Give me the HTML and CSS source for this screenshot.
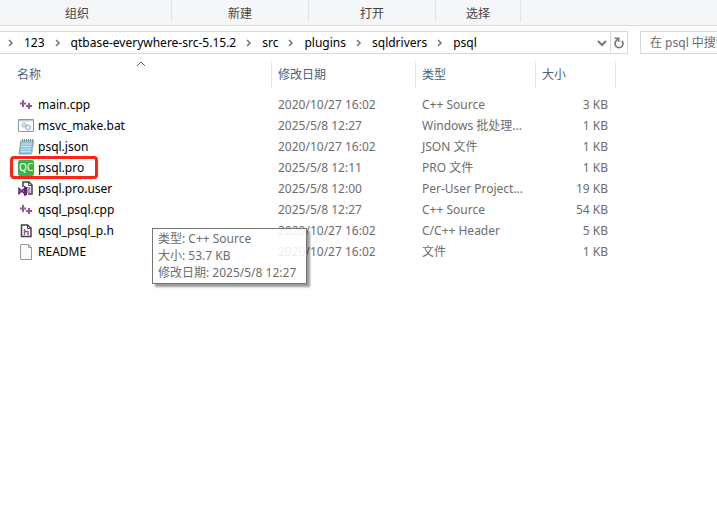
FILE: index.html
```html
<!DOCTYPE html>
<html lang="zh-CN">
<head>
    <meta charset="UTF-8">
    <meta name="viewport" content="width=device-width, initial-scale=1.0">
    <title>psql</title>
    <link rel="stylesheet" href="styles.css">
</head>
<body>
    <!-- Shared icons -->
    <svg class="sprite" aria-hidden="true">
        <symbol id="chevron" viewBox="0 0 8 8">
            <path d="M2 1l3 3-3 3" fill="none" stroke="#777" stroke-width="1.6"/>
        </symbol>
        <symbol id="cpp" viewBox="0 0 16 16">
            <path d="M5 3v7M2 6.500h6M11 6v6M8 9h6" fill="none" stroke="#96569b" stroke-width="2"/>
        </symbol>
    </svg>

    <!-- Ribbon -->
    <div class="ribbon">
        <div class="group group-organize">组织</div>
        <div class="group group-new">新建</div>
        <div class="group group-open">打开</div>
        <div class="group group-select">选择</div>
    </div>

    <!-- Address bar -->
    <div class="toolbar">
        <div class="address">
            <nav class="crumbs">
                <svg class="chevron"><use href="#chevron"/></svg>
                <a href="#">123</a>
                <svg class="chevron"><use href="#chevron"/></svg>
                <a href="#">qtbase-everywhere-src-5.15.2</a>
                <svg class="chevron"><use href="#chevron"/></svg>
                <a href="#">src</a>
                <svg class="chevron"><use href="#chevron"/></svg>
                <a href="#">plugins</a>
                <svg class="chevron"><use href="#chevron"/></svg>
                <a href="#">sqldrivers</a>
                <svg class="chevron"><use href="#chevron"/></svg>
                <a href="#">psql</a>
            </nav>
            <button class="history" type="button" aria-label="历史记录">
                <svg width="10" height="8" viewBox="0 0 10 8"><path d="M1 2l4 4 4-4" fill="none" stroke="#777" stroke-width="2"/></svg>
            </button>
            <button class="refresh" type="button" aria-label="刷新">
                <svg width="12" height="12" viewBox="0 0 12 12">
                    <path d="M8.800 3.800a4 4 0 1 1-5.600 0L5 2" fill="none" stroke="#777" stroke-width="1.700"/>
                    <path d="M1.500 1.200h4.300V5" fill="none" stroke="#777" stroke-width="1.500"/>
                </svg>
            </button>
        </div>
        <input class="search" type="text" placeholder="在 psql 中搜索" aria-label="搜索">
    </div>

    <!-- File list -->
    <table class="files">
        <colgroup>
            <col class="col-name">
            <col class="col-date">
            <col class="col-type">
            <col class="col-size">
        </colgroup>
        <thead>
            <tr>
                <th>
                    <svg class="sort" viewBox="0 0 10 6"><path d="M1 5l4-4 4 4" fill="none" stroke="#666"/></svg>
                    <button type="button">名称</button>
                </th>
                <th><button type="button">修改日期</button></th>
                <th><button type="button">类型</button></th>
                <th><button type="button">大小</button></th>
            </tr>
        </thead>
        <tbody>
            <tr>
                <td><a class="file" href="#"><svg class="icon"><use href="#cpp"/></svg>main.cpp</a></td>
                <td>2020/10/27 16:02</td>
                <td>C++ Source</td>
                <td>3 KB</td>
            </tr>
            <tr>
                <td><a class="file" href="#"><svg class="icon" viewBox="0 0 16 16">
                    <path d="M.5 1.500h15v12H.5z" fill="#fff" stroke="#8d949b"/>
                    <path d="M1 2h14v1.500H1z" fill="#c5cbd1"/>
                    <circle cx="6" cy="7" r="2" fill="#e5edf2" stroke="#8795a0" stroke-dasharray="1.500 .5"/>
                    <circle cx="10" cy="9.500" r="2.500" fill="#d9e8f3" stroke="#7f93a3" stroke-dasharray="1.500 .5"/>
                    <circle cx="10" cy="9.500" r="1" fill="#fff"/>
                </svg>msvc_make.bat</a></td>
                <td>2025/5/8 12:27</td>
                <td>Windows 批处理...</td>
                <td>1 KB</td>
            </tr>
            <tr>
                <td><a class="file" href="#"><svg class="icon" viewBox="0 0 16 16">
                    <path d="M3 1.500h12.500L13.500 15H1z" fill="#8fc6dc" stroke="#6ba3b8"/>
                    <path d="M3.500 5h10M3 7.500h10M3 10h10M2.500 12.500h10" stroke="#c5e6f1"/>
                    <path d="M3 2h12" stroke="#e4eef2"/>
                    <path d="M4.500 0v3M6.500 0v3M8.500 0v3M10.500 0v3M12.500 0v3M14.500 0v3" stroke="#7f8b92"/>
                    <path d="M13.500 15L15.500 4" fill="none" stroke="#c7b48c"/>
                </svg>psql.json</a></td>
                <td>2020/10/27 16:02</td>
                <td>JSON 文件</td>
                <td>1 KB</td>
            </tr>
            <tr>
                <td><a class="file marked" href="#"><span class="icon qt">QC</span>psql.pro</a></td>
                <td>2025/5/8 12:11</td>
                <td>PRO 文件</td>
                <td>1 KB</td>
            </tr>
            <tr>
                <td><a class="file" href="#"><svg class="icon" viewBox="0 0 16 16">
                    <path d="M5 6V1h6l3 3v9h-4" fill="#fff" stroke="#424242" stroke-width="1.500"/>
                    <path d="M10.500 1v3.500H14M9 7h3.500M9 9h3.500M9 11h3.500" fill="none" stroke="#424242"/>
                    <path d="M1 7.500v5l5.500-5v5z" fill="#fff" stroke="#68217a" stroke-width="1.500"/>
                    <path d="M6 5l3 1v8l-3 1z" fill="#68217a"/>
                </svg>psql.pro.user</a></td>
                <td>2025/5/8 12:00</td>
                <td>Per-User Project...</td>
                <td>19 KB</td>
            </tr>
            <tr>
                <td><a class="file" href="#"><svg class="icon"><use href="#cpp"/></svg>qsql_psql.cpp</a></td>
                <td>2025/5/8 12:27</td>
                <td>C++ Source</td>
                <td>54 KB</td>
            </tr>
            <tr>
                <td><a class="file" href="#"><svg class="icon" viewBox="0 0 16 16">
                    <path d="M3.500 2h6l3.500 3v8.500H3.500z" fill="#fff" stroke="#424242" stroke-width="1.500"/>
                    <path d="M9.500 2v3.500H13" fill="none" stroke="#424242"/>
                    <path d="M6.500 6v6M6.500 8.500H10V12" fill="none" stroke="#96569b" stroke-width="1.500"/>
                </svg>qsql_psql_p.h</a></td>
                <td>2020/10/27 16:02</td>
                <td>C/C++ Header</td>
                <td>5 KB</td>
            </tr>
            <tr>
                <td><a class="file" href="#"><svg class="icon" viewBox="0 0 16 16">
                    <path d="M2.500.5h8l3 3v12h-11z" fill="#fafafa" stroke="#999"/>
                    <path d="M10.500.5v3h3" fill="none" stroke="#999"/>
                </svg>README</a></td>
                <td>2020/10/27 16:02</td>
                <td>文件</td>
                <td>1 KB</td>
            </tr>
        </tbody>
    </table>

    <div class="tooltip" role="tooltip">
        <div>类型: C++ Source</div>
        <div>大小: 53.7 KB</div>
        <div>修改日期: 2025/5/8 12:27</div>
    </div>
</body>
</html>
```
FILE: styles.css
```css
* {
    box-sizing: border-box;
    margin: 0;
    padding: 0;
}

body {
    position: relative;
    min-height: 100vh;
    font-family: "Noto Sans", "Noto Sans CJK SC", sans-serif;
    font-size: 12px;
    line-height: 17px;
    color: #6d6d6d;
    background-color: #fff;
}

a {
    color: #000;
    text-decoration: none;
}

button {
    font: inherit;
    color: inherit;
    background: none;
    border: 0;
}

.sprite {
    position: absolute;
    width: 0;
    height: 0;
}

/* Ribbon */
.ribbon {
    display: flex;
    height: 26px;
    padding-bottom: 3px;
    background-color: #f5f6f7;
    border-bottom: 1px solid #dadbdc;
    color: #444;
}

.group {
    padding-top: 5px;
    border-right: 1px solid #e2e3e4;
    text-align: center;
}

.group-organize {
    width: 172px;
    padding-right: 17px;
}

.group-new {
    width: 137px;
}

.group-open {
    width: 127px;
}

.group-select {
    width: 85px;
}

/* Address bar */
.toolbar {
    display: flex;
    gap: 12px;
    margin-top: 5px;
}

.address {
    display: flex;
    flex: 1;
    height: 23px;
    border: 1px solid #d9d9d9;
    border-left: 0;
}

.crumbs {
    display: flex;
    flex: 1;
    align-items: center;
    gap: 9px;
    padding-left: 7px;
    white-space: nowrap;
}

.chevron {
    width: 8px;
    height: 8px;
}

.history,
.refresh {
    display: flex;
    align-items: center;
    justify-content: center;
    width: 17px;
}

.refresh {
    border-left: 1px solid #d9d9d9;
}

.search {
    width: 77px;
    height: 23px;
    padding-left: 9px;
    font: inherit;
    border: 1px solid #d9d9d9;
    border-right: 0;
    outline: none;
}

.search::placeholder {
    color: #6d6d6d;
}

/* File list */
.files {
    width: 605px;
    margin: 7px 0 0 11px;
    border-collapse: separate;
    border-spacing: 0;
    table-layout: fixed;
}

.col-name {
    width: 261px;
}

.col-date {
    width: 144px;
}

.col-type {
    width: 120px;
}

.col-size {
    width: 80px;
}

th {
    position: relative;
    height: 27px;
    padding-left: 6px;
    border-right: 1px solid #e5e5e5;
    color: #4c607a;
    font-weight: normal;
    text-align: left;
}

.sort {
    position: absolute;
    top: 0;
    left: 50%;
    width: 10px;
    height: 6px;
    margin-left: -5px;
}

tbody::before {
    content: "";
    display: block;
    height: 6px;
}

td {
    height: 21px;
    padding-left: 6px;
    white-space: nowrap;
}

td:last-child {
    padding-right: 8px;
    text-align: right;
}

.file {
    position: relative;
    display: inline-flex;
    align-items: center;
    gap: 4px;
    height: 21px;
    padding-left: 1px;
    vertical-align: top;
}

.icon {
    width: 16px;
    height: 16px;
}

.qt {
    border-radius: 2px;
    background-color: #37b44a;
    color: #fff;
    font-size: 10px;
    line-height: 15px;
    text-align: center;
}

.marked::after {
    content: "";
    position: absolute;
    inset: -1px -14px -1px -7px;
    border: 3px solid #fb2517;
    border-radius: 4px;
}

/* Tooltip */
.tooltip {
    position: absolute;
    top: 228px;
    left: 152px;
    min-width: 155px;
    padding: 1px 5px 2px;
    background-color: rgba(255, 255, 255, 0.88);
    border: 1px solid #767676;
    box-shadow: 3px 3px 2px rgba(0, 0, 0, 0.4);
    white-space: nowrap;
}
```
